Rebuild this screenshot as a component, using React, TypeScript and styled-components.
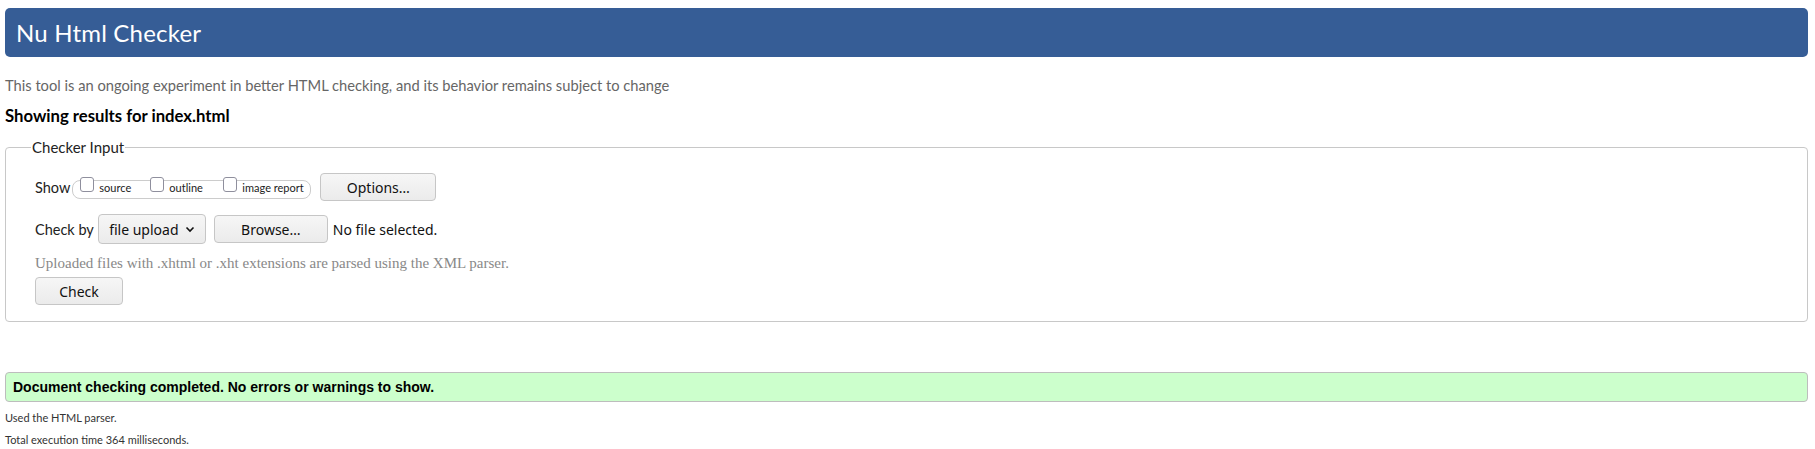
import { createGlobalStyle } from 'styled-components';
import styled from 'styled-components';

const GlobalStyle = createGlobalStyle`
  html, body {
    margin: 0;
    padding: 0;
    background: #ffffff;
  }
  body {
    font-family: Lato, 'Noto Sans', sans-serif;
    color: #000;
  }
`;

const Page = styled.div`
  padding: 8px 7px 0 5px;
`;

const Banner = styled.h1`
  margin: 0;
  height: 49px;
  line-height: 49px;
  padding-left: 11px;
  background: #365d96;
  border-radius: 5px;
  color: #fff;
  font-size: 24px;
  font-weight: 400;
  letter-spacing: 0.2px;
`;

const Intro = styled.p`
  margin: 19px 0 0;
  font-size: 14.7px;
  line-height: 18px;
  color: #666;
`;

const Showing = styled.p`
  margin: 13px 0 0;
  font-size: 16.7px;
  line-height: 18px;
  font-weight: 700;
`;

const Fieldset = styled.fieldset`
  margin: 13px 0 0;
  padding: 16px 25px 16px 29px;
  border: 1px solid #c8c8c8;
  border-radius: 4px;
  min-inline-size: 0;
`;

const Legend = styled.legend`
  padding: 0 1px;
  margin-left: -4px;
  font-size: 15px;
  color: #222;
`;

const Row = styled.div`
  display: flex;
  align-items: center;
  gap: 4px;
  font-size: 14.5px;
  color: #222;
  height: 30px;
`;

const CheckGroup = styled.span`
  display: inline-flex;
  align-items: flex-end;
  height: 17px;
  padding: 0 0 0 7px;
  margin-left: -2px;
  border: 1px solid #ccc;
  border-radius: 8px;
  margin-top: 4px;
`;

const Choice = styled.label<{ $width: number }>`
  display: inline-flex;
  align-items: flex-end;
  box-sizing: border-box;
  width: ${({ $width }) => $width}px;
  font-size: 11px;
  color: #222;
  height: 17px;
  line-height: 12px;
  padding-bottom: 4px;
`;

const Box = styled.span`
  display: inline-block;
  box-sizing: border-box;
  width: 14px;
  height: 15px;
  border: 1px solid #8f8f9d;
  border-radius: 3px;
  background: #fff;
  margin-right: 5px;
  align-self: flex-start;
  margin-top: -4px;
`;

const Button = styled.button<{ $width: number }>`
  box-sizing: border-box;
  width: ${({ $width }) => $width}px;
  height: 28px;
  border: 1px solid #c6c6c6;
  border-radius: 4px;
  background: linear-gradient(#f6f6f6, #ebebeb);
  font-family: 'Noto Sans', sans-serif;
  font-size: 14px;
  color: #111;
  padding: 0;
`;

const Select = styled.div`
  box-sizing: border-box;
  display: inline-flex;
  align-items: center;
  justify-content: center;
  gap: 6px;
  width: 108px;
  height: 30px;
  border: 1px solid #c6c6c6;
  border-radius: 4px;
  background: linear-gradient(#f6f6f6, #ebebeb);
  font-family: 'Noto Sans', sans-serif;
  font-size: 14px;
  color: #111;
`;

const FileNote = styled.span`
  font-family: 'Noto Sans', sans-serif;
  font-size: 14px;
  color: #111;
  margin-left: 1px;
`;

const Hint = styled.p`
  margin: 10px 0 5px;
  font-family: 'Liberation Serif', serif;
  font-size: 15px;
  line-height: 18px;
  color: #888;
`;

const Success = styled.div`
  margin-top: 50px;
  box-sizing: border-box;
  height: 30px;
  line-height: 28px;
  padding-left: 7px;
  background: #ccffcc;
  border: 1px solid #bdbdbd;
  border-radius: 4px;
  font-family: 'Liberation Sans', Arial, sans-serif;
  font-weight: 700;
  font-size: 14px;
  color: #000;
`;

const Detail = styled.p`
  margin: 9px 0 0;
  font-size: 11px;
  line-height: 13px;
  color: #333;
`;

function Chevron() {
  return (
    <svg width="10" height="7" viewBox="0 0 10 7" aria-hidden>
      <path d="M1.5 1.5 L5 5 L8.5 1.5" fill="none" stroke="#111" strokeWidth="1.6" />
    </svg>
  );
}

export default function App() {
  return (
    <>
      <GlobalStyle />
      <Page>
        <Banner>Nu Html Checker</Banner>
        <Intro>
          This tool is an ongoing experiment in better HTML checking, and its behavior remains subject to change
        </Intro>
        <Showing>Showing results for index.html</Showing>
        <Fieldset>
          <Legend>Checker Input</Legend>
          <Row>
            Show
            <CheckGroup>
              <Choice $width={70}>
                <Box />
                source
              </Choice>
              <Choice $width={73}>
                <Box />
                outline
              </Choice>
              <Choice $width={87}>
                <Box />
                image report
              </Choice>
            </CheckGroup>
            <Button $width={116} style={{ marginLeft: 5 }}>Options…</Button>
          </Row>
          <Row style={{ marginTop: 12 }}>
            Check by
            <Select>
              file upload
              <Chevron />
            </Select>
            <Button $width={114} style={{ marginLeft: 4 }}>Browse…</Button>
            <FileNote>No file selected.</FileNote>
          </Row>
          <Hint>Uploaded files with .xhtml or .xht extensions are parsed using the XML parser.</Hint>
          <Button $width={88}>Check</Button>
        </Fieldset>
        <Success>Document checking completed. No errors or warnings to show.</Success>
        <Detail>Used the HTML parser.</Detail>
        <Detail>Total execution time 364 milliseconds.</Detail>
      </Page>
    </>
  );
}
